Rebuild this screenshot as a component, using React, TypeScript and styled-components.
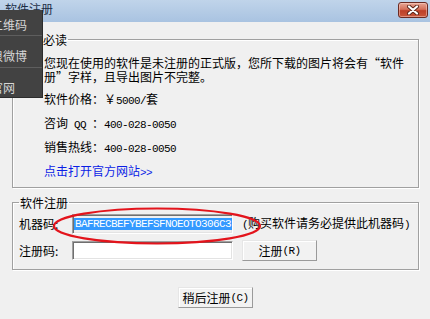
import React from "react";
import styled, { createGlobalStyle } from "styled-components";

const GlobalStyle = createGlobalStyle`
  html, body {
    margin: 0;
    padding: 0;
    background: #f0f0f0;
  }
  body {
    font-family: "Noto Sans CJK SC", "Noto Sans", sans-serif;
  }
`;

const menuItems = [
  { label: "二维码", shift: 9 },
  { label: "新浪微博", shift: 21 },
  { label: "官网", shift: 9 },
];

const App: React.FC = () => {
  return (
    <Window>
      <GlobalStyle />
      <TitleBar>
        <TitleText>软件注册</TitleText>
        <CloseButton type="button" aria-label="关闭">
          <svg width="14" height="10" viewBox="0 0 14 10">
            <path d="M3 1.5 L11 8.5 M11 1.5 L3 8.5" stroke="#5a2418" strokeWidth="4" strokeLinecap="round" />
            <path d="M3 1.5 L11 8.5 M11 1.5 L3 8.5" stroke="#ffffff" strokeWidth="2.2" strokeLinecap="round" />
          </svg>
        </CloseButton>
      </TitleBar>

      <Body>
        <Group $pad={31} $top={10} $bottom={4}>
          <Legend $shift={-2}>必读</Legend>
          <ParaLine>您现在使用的软件是未注册的正式版，您所下载的图片将会有“软件</ParaLine>
          <ParaLine>册”字样，且导出图片不完整。</ParaLine>
          <InfoList>
            <InfoRow>
              软件价格：￥<Num>5000/</Num>套
            </InfoRow>
            <InfoRow>
              咨询<Num> QQ </Num>：<Num>400-028-0050</Num>
            </InfoRow>
            <InfoRow>
              销售热线：<Num>400-028-0050</Num>
            </InfoRow>
            <InfoRow>
              <Link href="#">
                点击打开官方网站<Num>&gt;&gt;</Num>
              </Link>
            </InfoRow>
          </InfoList>
        </Group>

        <Group $pad={6} $top={5} $bottom={8}>
          <Legend $shift={0}>软件注册</Legend>
          <FormRow>
            <FieldLabel>机器码:</FieldLabel>
            <Field $readonly>
              <Selected>BAFRECBEFYBEFSFNOEOTO306C3</Selected>
            </Field>
            <Hint>
              <Num>(</Num>购买软件请务必提供此机器码<Num>)</Num>
            </Hint>
          </FormRow>
          <FormRow $top={6}>
            <FieldLabel>注册码:</FieldLabel>
            <Field />
            <PushButton type="button">
              注册<Num> (R)</Num>
            </PushButton>
          </FormRow>
        </Group>

        <Footer>
          <PushButton type="button">
            稍后注册<Num>(C)</Num>
          </PushButton>
        </Footer>
      </Body>

      <PopupMenu>
        <MenuList>
          {menuItems.map((item) => (
            <MenuItem key={item.label} $shift={item.shift}>
              {item.label}
            </MenuItem>
          ))}
        </MenuList>
      </PopupMenu>

      <Annotation width="214" height="42" viewBox="0 0 214 42">
        <ellipse cx="105" cy="20" rx="103" ry="17.5" fill="none" stroke="#e3141c" strokeWidth="2.2" />
      </Annotation>
    </Window>
  );
};

const Window = styled.div`
  position: relative;
  width: 430px;
  height: 319px;
  overflow: hidden;
  background: #f0f0f0;
  display: flex;
  flex-direction: column;
  color: #000000;
`;

const TitleBar = styled.div`
  height: 22px;
  flex-shrink: 0;
  display: flex;
  align-items: center;
  justify-content: space-between;
  padding: 0 2px 0 5px;
  box-sizing: border-box;
  background: linear-gradient(#c0d4ea, #a9c3e1);
`;

const TitleText = styled.span`
  font-size: 12px;
  line-height: 14px;
  color: #1d2f47;
  margin-top: -4px;
`;

const CloseButton = styled.button`
  width: 30px;
  height: 16px;
  margin-top: -3px;
  padding: 0;
  border: 1px solid #6b2a22;
  border-radius: 3px;
  background: linear-gradient(#e7a796 0%, #d5705a 45%, #bd3f27 55%, #c9573c 100%);
  box-shadow: inset 0 0 0 1px rgba(255, 220, 210, 0.45);
  display: flex;
  align-items: center;
  justify-content: center;
`;

const Body = styled.div`
  display: flex;
  flex-direction: column;
  gap: 8px;
  padding: 11px 11px 0 12px;
`;

const Group = styled.fieldset<{ $pad: number; $top: number; $bottom: number }>`
  margin: 0;
  min-width: 0;
  padding: ${(p) => p.$top}px 4px ${(p) => p.$bottom}px ${(p) => p.$pad}px;
  border: 1px solid #a0a0a0;
  box-shadow: inset 1px 1px 0 #ffffff, 1px 1px 0 #ffffff;
  display: flex;
  flex-direction: column;
`;

const Legend = styled.legend<{ $shift: number }>`
  font-size: 12px;
  line-height: 13px;
  padding: 0 1px;
  margin-left: ${(p) => p.$shift}px;
`;

const ParaLine = styled.div`
  font-size: 12px;
  line-height: 14px;
  height: 14px;
  white-space: nowrap;
`;

const InfoList = styled.div`
  display: flex;
  flex-direction: column;
  margin-top: 3px;
`;

const InfoRow = styled.div`
  font-size: 12px;
  line-height: 24px;
  height: 24px;
  white-space: nowrap;
`;

const Num = styled.span`
  font-family: "Liberation Mono", monospace;
  font-size: 11px;
  letter-spacing: -0.6px;
`;

const Link = styled.a`
  color: #0b1ee6;
  text-decoration: none;
`;

const FormRow = styled.div<{ $top?: number }>`
  display: flex;
  align-items: center;
  margin-top: ${(p) => p.$top ?? 0}px;
  height: ${(p) => (p.$top ? 21 : 20)}px;
`;

const FieldLabel = styled.span`
  width: 53px;
  flex-shrink: 0;
  font-size: 12px;
  line-height: 14px;
`;

const Field = styled.div<{ $readonly?: boolean }>`
  width: 161px;
  height: ${(p) => (p.$readonly ? 20 : 19)}px;
  box-sizing: border-box;
  flex-shrink: 0;
  background: ${(p) => (p.$readonly ? "#f0f0f0" : "#ffffff")};
  border: 1px solid;
  border-color: #a0a0a0 #ffffff #ffffff #a0a0a0;
  box-shadow: inset 1px 1px 0 #6f6f6f, inset -1px -1px 0 #e3e3e3;
  display: flex;
  align-items: center;
  padding-left: 1px;
`;

const Selected = styled.span`
  background: #3399ff;
  color: #ffffff;
  font-family: "Liberation Mono", monospace;
  font-size: 11px;
  letter-spacing: -0.6px;
  line-height: 12px;
  padding: 0 1px;
`;

const Hint = styled.span`
  margin-left: 9px;
  font-size: 12px;
  line-height: 14px;
  white-space: nowrap;
`;

const PushButton = styled.button`
  width: 75px;
  height: 21px;
  margin-left: 9px;
  padding: 0;
  font-family: "Noto Sans CJK SC", sans-serif;
  font-size: 12px;
  line-height: 14px;
  color: #000000;
  background: #f2f2f2;
  border: 1px solid;
  border-color: #e6e6e6 #9a9a9a #9a9a9a #e6e6e6;
  box-shadow: inset 1px 1px 0 #ffffff;
  display: flex;
  align-items: center;
  justify-content: center;
`;

const Footer = styled.div`
  display: flex;
  justify-content: center;
  padding-top: 9px;
  padding-right: 9px;
`;

const PopupMenu = styled.div`
  position: absolute;
  left: 0;
  top: 10px;
  width: 43px;
  height: 88px;
  overflow: hidden;
  background: #424242;
  border-right: 1px solid #2c2c2c;
  border-bottom: 1px solid #2c2c2c;
  box-sizing: border-box;
`;

const MenuList = styled.div`
  margin-top: -5px;
  display: flex;
  flex-direction: column;
`;

const MenuItem = styled.div<{ $shift: number }>`
  height: 31px;
  box-sizing: border-box;
  border-bottom: 1px solid #5e5e5e;
  padding-top: 12px;
  font-size: 12px;
  line-height: 16px;
  color: #d6d6d6;
  white-space: nowrap;
  text-indent: -${(p) => p.$shift}px;
  & + & {
    height: 32px;
  }
`;

const Annotation = styled.svg`
  position: absolute;
  left: 52px;
  top: 206px;
  pointer-events: none;
`;

export default App;
